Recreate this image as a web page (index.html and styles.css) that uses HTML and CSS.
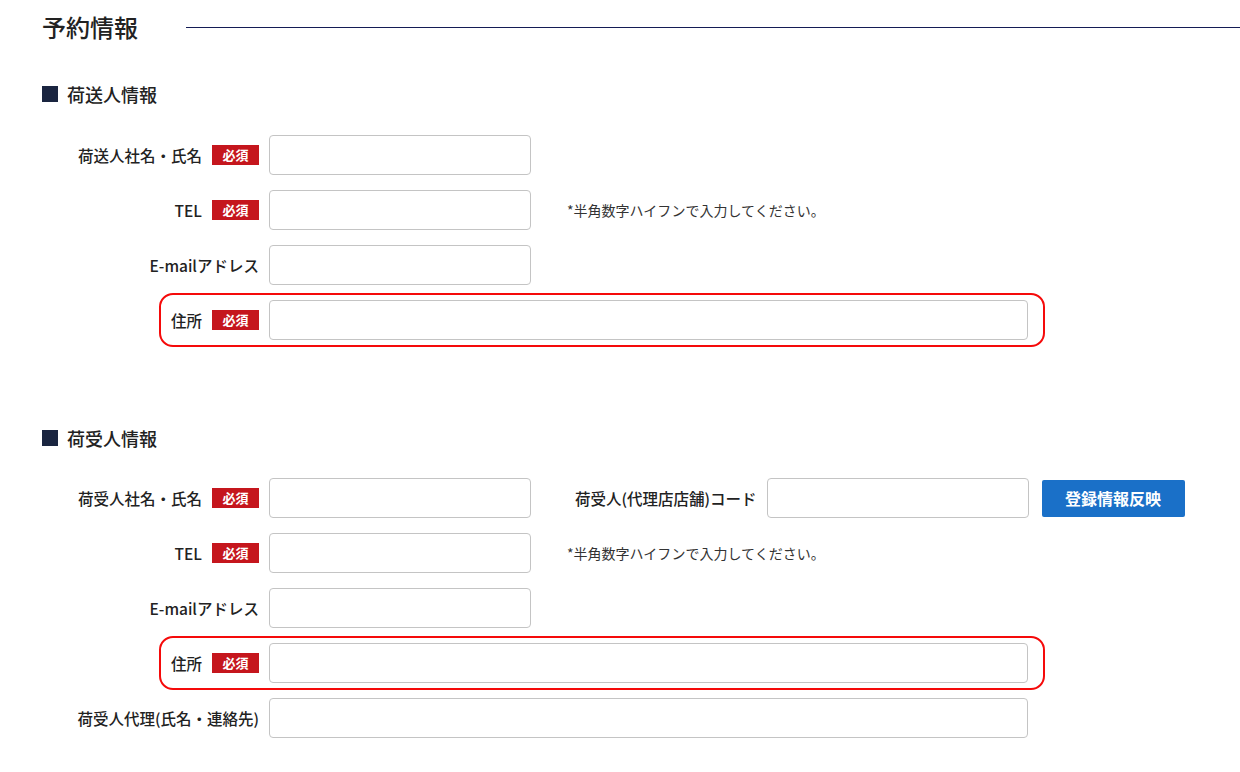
FILE: index.html
```html
<!DOCTYPE html>
<html lang="ja">
  <head>
    <meta charset="UTF-8" />
    <meta name="viewport" content="width=device-width, initial-scale=1.0" />
    <title>予約情報</title>
    <link rel="stylesheet" href="styles.css">
  </head>
  <body>
    <div class="page">
      <div class="page-title">
        <h1>予約情報</h1>
        <span class="title-line"></span>
      </div>

      <!-- 荷送人 -->
      <section class="section">
        <h2 class="section-title"><span class="mark"></span>荷送人情報</h2>
        <div class="rows">
          <div class="row">
            <div class="label-cell">
              <label for="senderName">荷送人社名・氏名</label>
              <span class="badge">必須</span>
            </div>
            <input type="text" id="senderName" class="field" />
          </div>
          <div class="row">
            <div class="label-cell">
              <label for="senderTel">TEL</label>
              <span class="badge">必須</span>
            </div>
            <input type="text" id="senderTel" class="field" />
            <p class="note">*半角数字ハイフンで入力してください。</p>
          </div>
          <div class="row">
            <div class="label-cell">
              <label for="senderMail">E-mailアドレス</label>
            </div>
            <input type="email" id="senderMail" class="field" />
          </div>
          <div class="row highlight">
            <div class="label-cell">
              <label for="senderAddr">住所</label>
              <span class="badge">必須</span>
            </div>
            <input type="text" id="senderAddr" class="field wide" />
          </div>
        </div>
      </section>

      <!-- 荷受人 -->
      <section class="section second">
        <h2 class="section-title"><span class="mark"></span>荷受人情報</h2>
        <div class="rows">
          <div class="row">
            <div class="label-cell">
              <label for="receiverName">荷受人社名・氏名</label>
              <span class="badge">必須</span>
            </div>
            <input type="text" id="receiverName" class="field" />
            <label for="agentCode" class="sub-label">荷受人(代理店店舗)コード</label>
            <input type="text" id="agentCode" class="field" />
            <button type="button" class="apply-btn">登録情報反映</button>
          </div>
          <div class="row">
            <div class="label-cell">
              <label for="receiverTel">TEL</label>
              <span class="badge">必須</span>
            </div>
            <input type="text" id="receiverTel" class="field" />
            <p class="note">*半角数字ハイフンで入力してください。</p>
          </div>
          <div class="row">
            <div class="label-cell">
              <label for="receiverMail">E-mailアドレス</label>
            </div>
            <input type="email" id="receiverMail" class="field" />
          </div>
          <div class="row highlight">
            <div class="label-cell">
              <label for="receiverAddr">住所</label>
              <span class="badge">必須</span>
            </div>
            <input type="text" id="receiverAddr" class="field wide" />
          </div>
          <div class="row">
            <div class="label-cell">
              <label for="receiverAgent">荷受人代理(氏名・連絡先)</label>
            </div>
            <input type="text" id="receiverAgent" class="field wide" />
          </div>
        </div>
      </section>
    </div>
  </body>
</html>
```

FILE: styles.css
```css
body {
  margin: 0;
  font-family: "Noto Sans CJK JP", "Noto Sans", sans-serif;
  color: #222;
  background: #fff;
}
.page {
  padding: 9px 0 0 42px;
}
.page-title {
  display: flex;
  align-items: center;
  height: 36px;
}
.page-title h1 {
  margin: 0;
  font-size: 24px;
  font-weight: 500;
  line-height: 34px;
}
.title-line {
  flex: 1;
  height: 1px;
  margin-left: 48px;
  background-color: #141c55;
}
.section {
  margin-top: 37px;
}
.section.second {
  margin-top: 86px;
}
.section-title {
  display: flex;
  align-items: center;
  gap: 9px;
  margin: 0 0 29px;
  font-size: 18px;
  font-weight: 500;
  line-height: 24px;
}
.section.second .section-title {
  margin-bottom: 28px;
}
.mark {
  width: 16px;
  height: 16px;
  background-color: #1a2540;
}
.rows {
  display: flex;
  flex-direction: column;
  gap: 15px;
}
.row {
  display: flex;
  align-items: center;
  height: 40px;
}
.row.highlight {
  position: relative;
  width: fit-content;
}
.row.highlight::before {
  content: "";
  position: absolute;
  top: -7px;
  bottom: -7px;
  left: 117px;
  right: -17px;
  border: 2px solid #f50a0a;
  border-radius: 14px;
  pointer-events: none;
}
.label-cell {
  display: flex;
  align-items: center;
  justify-content: flex-end;
  gap: 10px;
  width: 217px;
}
label {
  font-size: 15.5px;
  font-weight: 500;
  color: #222;
  white-space: nowrap;
}
.badge {
  display: inline-block;
  width: 47px;
  height: 20px;
  line-height: 20px;
  text-align: center;
  background-color: #c5161d;
  color: white;
  font-size: 13px;
  font-weight: 700;
}
.field {
  box-sizing: border-box;
  width: 262px;
  height: 40px;
  margin: 0 0 0 10px;
  padding: 0 8px;
  border: 1px solid #c4c4c4;
  border-radius: 4px;
  font-size: 15px;
  background: #fff;
}
.field.wide {
  width: 759px;
}
.field:focus {
  outline: none;
  border-color: #2563eb;
}
.note {
  margin: 0 0 0 36px;
  font-size: 14px;
  color: #333;
}
.sub-label {
  margin-left: 44px;
}
.apply-btn {
  width: 143px;
  height: 37px;
  margin-left: 13px;
  border: none;
  border-radius: 2px;
  background-color: #1a70c8;
  color: white;
  font-family: inherit;
  font-size: 16px;
  font-weight: 700;
  cursor: pointer;
}
```
